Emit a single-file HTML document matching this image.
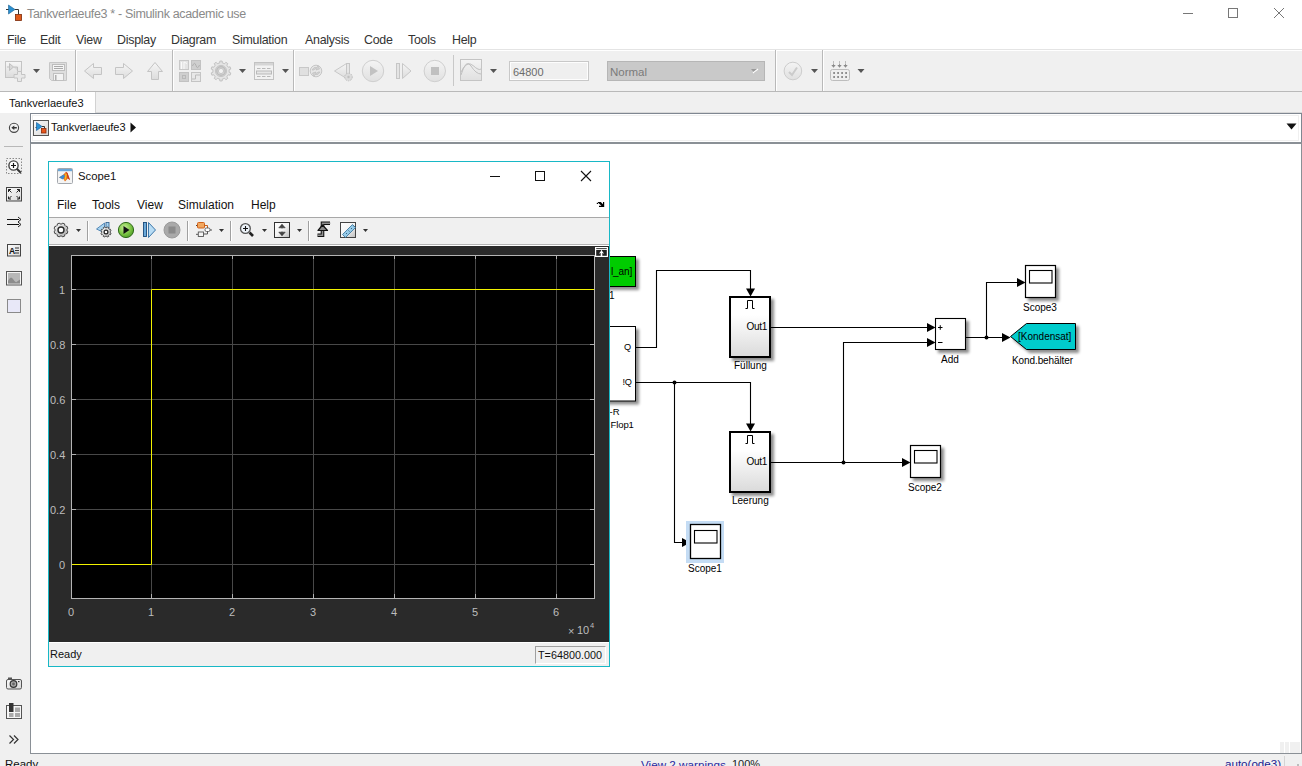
<!DOCTYPE html>
<html><head><meta charset="utf-8">
<style>
*{box-sizing:border-box;margin:0;padding:0}
html,body{width:1302px;height:766px;overflow:hidden;background:#fff;font-family:"Liberation Sans",sans-serif;}
.a{position:absolute}
.t{position:absolute;white-space:nowrap;line-height:1}
svg{position:absolute;overflow:visible}
</style></head><body>
<!-- title bar -->
<div class="a" style="left:0;top:0;width:1302px;height:30px;background:#fff"></div>
<svg style="left:0;top:0" width="30" height="30">
  <path d="M6 9.5H9" stroke="#333" stroke-width="1"/>
  <path d="M8.5 5 L15 9.5 L8.5 14 Z" fill="#2a8fd0" stroke="#1a5f90" stroke-width="0.6"/>
  <path d="M15 9.5H18.5V14.5" stroke="#333" stroke-width="1" fill="none"/>
  <rect x="15.5" y="14.5" width="6" height="6" fill="#e05a1a" stroke="#7a2a0a" stroke-width="0.8"/>
</svg>
<div class="t" style="left:27px;top:7.5px;font-size:12.5px;letter-spacing:-.33px;color:#8a8a8a">Tankverlaeufe3 * - Simulink academic use</div>
<svg style="left:0;top:0" width="1302" height="30">
  <path d="M1183 13.5H1193" stroke="#777" stroke-width="1"/>
  <rect x="1228.5" y="8.5" width="9" height="9" fill="none" stroke="#777" stroke-width="1"/>
  <path d="M1274 8L1284 18M1284 8L1274 18" stroke="#777" stroke-width="1"/>
</svg>
<!-- menu bar -->
<div class="t" style="left:7px;top:33.5px;font-size:12.4px;letter-spacing:-.25px;color:#333">File</div>
<div class="t" style="left:40px;top:33.5px;font-size:12.4px;letter-spacing:-.25px;color:#333">Edit</div>
<div class="t" style="left:76px;top:33.5px;font-size:12.4px;letter-spacing:-.25px;color:#333">View</div>
<div class="t" style="left:117px;top:33.5px;font-size:12.4px;letter-spacing:-.25px;color:#333">Display</div>
<div class="t" style="left:171px;top:33.5px;font-size:12.4px;letter-spacing:-.25px;color:#333">Diagram</div>
<div class="t" style="left:232px;top:33.5px;font-size:12.4px;letter-spacing:-.25px;color:#333">Simulation</div>
<div class="t" style="left:305px;top:33.5px;font-size:12.4px;letter-spacing:-.25px;color:#333">Analysis</div>
<div class="t" style="left:364px;top:33.5px;font-size:12.4px;letter-spacing:-.25px;color:#333">Code</div>
<div class="t" style="left:408px;top:33.5px;font-size:12.4px;letter-spacing:-.25px;color:#333">Tools</div>
<div class="t" style="left:452px;top:33.5px;font-size:12.4px;letter-spacing:-.25px;color:#333">Help</div>
<!-- toolbar -->
<div class="a" style="left:0;top:49px;width:1302px;height:1px;background:#e4e4e4"></div>
<div class="a" style="left:0;top:50px;width:1302px;height:41px;background:#f0f0f0"></div>
<div class="a" style="left:0;top:91px;width:1302px;height:1px;background:#b9b9b9"></div>
<svg style="left:0;top:50px" width="1302" height="41" viewBox="0 50 1302 41">
<defs>
<linearGradient id="gg" x1="0" y1="0" x2="0" y2="1"><stop offset="0" stop-color="#f6f6f6"/><stop offset="1" stop-color="#dcdcdc"/></linearGradient>
<linearGradient id="gc" x1="0" y1="0" x2="0" y2="1"><stop offset="0" stop-color="#f4f4f4"/><stop offset="1" stop-color="#e0e0e0"/></linearGradient>
</defs>
<!-- separators -->
<path d="M0 50.5H1302" stroke="#fff"/>
<path d="M75.5 50V91M172.5 50V91M293.5 50V91M775.5 50V91M822.5 50V91" stroke="#b9b9b9" stroke-width="1"/>
<path d="M76.5 51V91M173.5 51V91M294.5 51V91M776.5 51V91M823.5 51V91" stroke="#fff" stroke-width="1"/>
<path d="M453.5 55V86" stroke="#c8c8c8" stroke-width="1"/>
<!-- new model -->
<rect x="5.5" y="61.5" width="16" height="16" fill="url(#gg)" stroke="#c4c4c4"/>
<path d="M7 67H9.5M9.5 63.5L13.5 67L9.5 70.5Z M13.5 67H17.5V71" stroke="#c0c0c0" fill="#d8d8d8" stroke-width="1"/>
<path d="M17.5 71.5h4v3h3.5v3.5h-3.5v3.5h-4v-3.5h-3.5v-3.5h3.5z" fill="#e8e8e8" stroke="#c4c4c4"/>
<path d="M33 69H40L36.5 73Z" fill="#555"/>
<!-- save -->
<path d="M49.5 62.5H66.5V80.5H51.5L49.5 78.5Z" fill="#dedede" stroke="#c6c6c6"/>
<rect x="52.5" y="64.5" width="12" height="6" fill="#f5f5f5" stroke="#bdbdbd"/>
<path d="M54 66.5H63M54 68.5H63" stroke="#a9a9a9"/>
<rect x="53.5" y="73.5" width="10" height="7" fill="#f3f3f3" stroke="#c0c0c0"/>
<rect x="55" y="75" width="1.5" height="5.5" fill="#b0b0b0"/>
<!-- back/fwd/up -->
<path d="M84.5 71L93.5 63.5V67.5H101.5V74.5H93.5V78.5Z" fill="url(#gg)" stroke="#c4c4c4"/>
<path d="M132.5 71L123.5 63.5V67.5H115.5V74.5H123.5V78.5Z" fill="url(#gg)" stroke="#c4c4c4"/>
<path d="M155 62.5L162.5 71.5H158.5V79.5H151.5V71.5H147.5Z" fill="url(#gg)" stroke="#c4c4c4"/>
<!-- library -->
<rect x="179.5" y="60.5" width="9" height="9" fill="#e4e4e4" stroke="#c8c8c8"/>
<path d="M181.5 69V62M184 69V62L187 63.5" stroke="#fafafa" fill="none"/>
<rect x="191.5" y="60.5" width="9" height="9" fill="#cfcfcf" stroke="#c2c2c2"/>
<path d="M192.5 66Q194.5 61 196 65.5T199.5 65" stroke="#b0b0b0" fill="none"/>
<rect x="179.5" y="72.5" width="9" height="9" fill="#cfcfcf" stroke="#c2c2c2"/>
<rect x="182.5" y="75.5" width="3" height="3" fill="none" stroke="#b8b8b8"/>
<rect x="191.5" y="72.5" width="9" height="9" fill="#e8e8e8" stroke="#c4c4c4"/>
<path d="M192 79H195.5V75H200" stroke="#bcbcbc" fill="none"/>
<!-- gear -->
<path d="M229.10 72.28 L230.81 72.95 L230.08 75.19 L228.31 74.72 L226.80 76.80 L227.79 78.34 L225.89 79.72 L224.72 78.31 L222.28 79.10 L222.18 80.93 L219.82 80.93 L219.72 79.10 L217.28 78.31 L216.11 79.72 L214.21 78.34 L215.20 76.80 L213.69 74.72 L211.92 75.19 L211.19 72.95 L212.90 72.28 L212.90 69.72 L211.19 69.05 L211.92 66.81 L213.69 67.28 L215.20 65.20 L214.21 63.66 L216.11 62.28 L217.28 63.69 L219.72 62.90 L219.82 61.07 L222.18 61.07 L222.28 62.90 L224.72 63.69 L225.89 62.28 L227.79 63.66 L226.80 65.20 L228.31 67.28 L230.08 66.81 L230.81 69.05 L229.10 69.72Z" fill="#e4e4e4" stroke="#c2c2c2"/>
<circle cx="221" cy="71" r="5.6" fill="#d8d8d8" stroke="#c6c6c6"/>
<circle cx="221" cy="71" r="4.2" fill="none" stroke="#bdbdbd" stroke-width="1.4"/>
<circle cx="221" cy="71" r="2.6" fill="#f2f2f2" stroke="#c6c6c6"/>
<path d="M239 69H246L242.5 73Z" fill="#555"/>
<!-- table -->
<rect x="254.5" y="62.5" width="19" height="17" fill="#f2f2f2" stroke="#c2c2c2"/>
<rect x="255" y="63" width="18" height="2.5" fill="#d5d5d5"/>
<path d="M257 68.5h3.5M262 68.5h3.5M267 68.5h3.5M257 76.5h3.5M262 76.5h3.5M267 76.5h3.5" stroke="#b9b9b9"/>
<rect x="256.5" y="71" width="15" height="3" fill="#e6e6e6" stroke="#b9b9b9"/>
<path d="M282 69H289L285.5 73Z" fill="#555"/>
<!-- record -->
<rect x="299.5" y="67.5" width="9" height="8" fill="#e0e0e0" stroke="#c8c8c8"/>
<circle cx="316" cy="71" r="5.8" fill="#e6e6e6" stroke="#c6c6c6"/>
<path d="M312 70q1.5-3.5 5-2.5l1-2 1.5 3.5-3.5 1 1-1.2q-2.5-.5-3 1.2z M320 72q-1.5 3.5-5 2.5l-1 2-1.5-3.5 3.5-1-1 1.2q2.5.5 3-1.2z" fill="#d2d2d2" stroke="#c0c0c0" stroke-width=".7"/>
<!-- step back -->
<path d="M334.5 71L346.5 63.5V78.5Z" fill="url(#gg)" stroke="#c8c8c8"/>
<rect x="346.5" y="63.5" width="3" height="14" fill="#e6e6e6" stroke="#c6c6c6"/>
<circle cx="348.5" cy="77" r="3.8" fill="#dcdcdc" stroke="#bfbfbf" stroke-dasharray="1.5 1"/>
<circle cx="348.5" cy="77" r="1.2" fill="#c0c0c0"/>
<!-- play -->
<circle cx="373" cy="71" r="10.7" fill="url(#gc)" stroke="#cfcfcf"/>
<path d="M370 66V76L378 71Z" fill="#c2c2c2"/>
<!-- step fwd -->
<rect x="396.5" y="63.5" width="3" height="15" fill="#e4e4e4" stroke="#c6c6c6"/>
<path d="M402.5 63.5L411 71L402.5 78.5Z" fill="url(#gg)" stroke="#c8c8c8"/>
<!-- stop -->
<circle cx="434.8" cy="71" r="10.7" fill="url(#gc)" stroke="#cfcfcf"/>
<rect x="431" y="67" width="8" height="8" fill="#c0c0c0"/>
<!-- scope icon -->
<rect x="460.5" y="59.5" width="21" height="21" fill="url(#gc)" stroke="#c4c4c4"/>
<path d="M461 75Q466 58 471 66T481 74M461 72Q467 60 473 65.5T481 69" stroke="#c0c0c0" fill="none" stroke-width="1"/>
<path d="M490 69H497L493.5 73Z" fill="#555"/>
<!-- input -->
<rect x="509.5" y="61.5" width="79" height="19" fill="#efefef" stroke="#c8c8c8"/>
<rect x="510.5" y="62.5" width="77" height="17" fill="none" stroke="#fdfdfd"/>
<!-- normal box -->
<rect x="607.5" y="61.5" width="157" height="19" fill="#c9c9c9" stroke="#b6b6b6"/>
<path d="M751 69H758L754.5 73Z" fill="#9a9a9a"/>
<path d="M753 73L758 69" stroke="#fff" stroke-width="1.2"/>
<!-- check -->
<circle cx="792.9" cy="71" r="8.8" fill="url(#gc)" stroke="#cdcdcd"/>
<path d="M789 72L792 75L797 67.5" stroke="#cbcbcb" stroke-width="2" fill="none"/>
<path d="M811 69H818L814.5 73Z" fill="#555"/>
<!-- pin icon -->
<path d="M833.5 61.5V62.5M839.5 61.5V62.5M845.5 61.5V62.5" stroke="#8a8a8a" stroke-width="1"/>
<path d="M833.5 63.5V66M839.5 63.5V66M845.5 63.5V66" stroke="#9a9a9a" stroke-width="1"/>
<path d="M831.3 65L833.5 67.8L835.7 65ZM837.3 65L839.5 67.8L841.7 65ZM843.3 65L845.5 67.8L847.7 65Z" fill="#8a8a8a"/>
<rect x="830.5" y="69.5" width="19" height="11" rx="2" fill="#efefef" stroke="#bdbdbd"/>
<path d="M833.2 73H835M837.2 73H839M841.2 73H843M845.2 73H847M833.2 77H835M837.2 77H839M841.2 77H843M845.2 77H847" stroke="#8f8f8f" stroke-width="1.8"/>
<path d="M857.5 69H864.5L861 73Z" fill="#555"/>
</svg>
<div class="t" style="left:513px;top:67px;font-size:11px;color:#6b6b6b">64800</div>
<div class="t" style="left:610px;top:67px;font-size:11.5px;color:#7a7a7a">Normal</div>

<!-- tab row -->
<div class="a" style="left:0;top:92px;width:1302px;height:21px;background:#f0f0f0"></div>
<div class="a" style="left:0;top:92px;width:95px;height:21px;background:#fff"></div>
<div class="a" style="left:95px;top:92px;width:1px;height:21px;background:#d2d2d2"></div>
<div class="a" style="left:96px;top:112px;width:1206px;height:1px;background:#d8d8d8"></div>
<div class="t" style="left:9px;top:98px;font-size:11px;color:#111">Tankverlaeufe3</div>
<!-- left palette -->
<div class="a" style="left:0;top:113px;width:30px;height:641px;background:#f0f0f0"></div>
<!-- breadcrumb -->
<div class="a" style="left:30px;top:113px;width:1272px;height:30px;background:#fff;border:1px solid #7f8791"></div>
<div class="a" style="left:32px;top:115px;width:1267px;height:26px;border:1px solid #f0f0f0"></div>
<div class="a" style="left:31px;top:142px;width:1271px;height:2px;background:#8a9096"></div>
<!-- breadcrumb contents -->

<svg style="left:0;top:0" width="1302" height="766">
<defs><linearGradient id="gw" x1="0" y1="0" x2="1" y2="1"><stop offset="0" stop-color="#fafafa"/><stop offset="1" stop-color="#d8d8d8"/></linearGradient></defs>
<rect x="33.5" y="120.5" width="15" height="15" fill="url(#gw)" stroke="#555"/>
<path d="M35.5 127.5H37.5" stroke="#333"/>
<path d="M36.5 122.5L42 126.5L36.5 130.5Z" fill="#2d95d6" stroke="#1a60a0" stroke-width=".7"/>
<path d="M42 126.5H44.5V128.5" stroke="#333" fill="none"/>
<rect x="41.5" y="128.5" width="4.5" height="4.5" fill="#e8561c" stroke="#8a2a08" stroke-width=".8"/>
<path d="M130.5 122.5V132.5L136 127.5Z" fill="#111"/>
<path d="M1286.5 123.5H1296.5L1291.5 129.5Z" fill="#111"/>
<!-- palette -->
<circle cx="14" cy="127.8" r="4.6" fill="none" stroke="#444" stroke-width="1.1"/>
<path d="M11.3 127.8L14.3 125.5V127H16.8V128.6H14.3V130.1Z" fill="#333"/>
<path d="M4 146.5H23" stroke="#b8b8b8"/>
<rect x="6.5" y="158.5" width="15" height="15" fill="none" stroke="#8a8a8a" stroke-dasharray="1.5 1.5"/>
<circle cx="13.5" cy="165.5" r="4.6" fill="#fff" stroke="#444" stroke-width="1.4"/>
<path d="M16.8 168.8L20.8 172.8" stroke="#333" stroke-width="2"/>
<path d="M11 165.5H16M13.5 163V168" stroke="#111" stroke-width="1.2"/>
<rect x="6.5" y="187.5" width="15" height="13.5" fill="url(#gw)" stroke="#444"/>
<path d="M8.5 189.5L11.5 192.5M8.5 189.5h2.5M8.5 189.5v2.5 M19.5 189.5L16.5 192.5M19.5 189.5h-2.5M19.5 189.5v2.5 M8.5 199L11.5 196M8.5 199h2.5M8.5 199v-2.5 M19.5 199L16.5 196M19.5 199h-2.5M19.5 199v-2.5" stroke="#222" fill="none" stroke-width="1"/>
<path d="M7 219.5H19M7 224.5H19" stroke="#111" stroke-width="1.2"/>
<path d="M18 217L21 219.5L18 222M18 222L21 224.5L18 227" stroke="#222" fill="none" stroke-width="1"/>
<rect x="7.5" y="244.5" width="13" height="11.5" fill="url(#gw)" stroke="#444"/>
<text x="9" y="253.5" font-family="Liberation Sans" font-weight="bold" font-size="8.5" fill="#111">A</text>
<path d="M15 248h4M15 250.5h4M15 253h4" stroke="#333" stroke-width="1"/>
<rect x="6.5" y="271.5" width="15" height="13.5" fill="#f4f4f4" stroke="#555"/>
<rect x="8" y="273" width="12" height="10.5" fill="#b8b8b8"/>
<path d="M8 281Q10.5 275 13 279T16.5 282T20 279.5V283.5H8Z" fill="#8c8c8c"/>
<rect x="7.5" y="299.5" width="13" height="13" fill="#e8e8f8" stroke="#8a8a8a"/>
<!-- camera -->
<rect x="6.5" y="679.5" width="15" height="9.5" rx="1.5" fill="url(#gw)" stroke="#555"/>
<rect x="8" y="677.5" width="4" height="2" fill="#555"/>
<circle cx="13.5" cy="684" r="3.3" fill="#aaa" stroke="#333" stroke-width="1.2"/>
<circle cx="13.5" cy="684" r="1.4" fill="#666"/>
<rect x="18" y="681" width="1.5" height="1.2" fill="#333"/>
<!-- model browser -->
<rect x="6.5" y="705.5" width="15" height="13" fill="#f6f6f6" stroke="#555"/>
<rect x="9" y="703" width="4.5" height="9" fill="#333"/>
<rect x="15" y="707.5" width="5" height="4.5" fill="#aaa"/>
<rect x="9" y="713" width="4.5" height="4" fill="#aaa"/>
<rect x="15" y="713" width="5" height="4" fill="#aaa"/>
<path d="M9.5 735.5L13.5 739.5L9.5 743.5M14 735.5L18 739.5L14 743.5" stroke="#333" fill="none" stroke-width="1.2"/>
</svg>
<div class="t" style="left:51px;top:122px;font-size:11px;color:#111">Tankverlaeufe3</div>
<!-- canvas -->
<div class="a" style="left:30px;top:143px;width:1px;height:610px;background:#8a9096"></div>
<div class="a" style="left:30px;top:753px;width:1272px;height:1px;background:#8a9096"></div>
<div class="a" style="left:1301px;top:143px;width:1px;height:611px;background:#8a9096"></div>
<div class="a" style="left:1280px;top:742px;width:4px;height:11px;background:#f0f0f0"></div>
<div class="a" style="left:1285px;top:742px;width:4px;height:11px;background:#f0f0f0"></div>
<div class="a" style="left:1290px;top:742px;width:10px;height:11px;background:#f0f0f0"></div>
<!-- diagram -->
<svg style="left:0;top:0" width="1302" height="766">
<defs>
<linearGradient id="gb" x1="0" y1="0" x2="0" y2="1"><stop offset="0" stop-color="#ffffff"/><stop offset=".3" stop-color="#ffffff"/><stop offset="1" stop-color="#dadada"/></linearGradient>
<filter id="sh" x="-30%" y="-30%" width="160%" height="160%"><feGaussianBlur in="SourceAlpha" stdDeviation="1.6"/><feOffset dx="2.5" dy="2.5"/><feComponentTransfer><feFuncA type="linear" slope="0.45"/></feComponentTransfer><feMerge><feMergeNode/><feMergeNode in="SourceGraphic"/></feMerge></filter>
</defs>
<g fill="none" stroke="#000" stroke-width="1.1">
<!-- Q to Fuellung -->
<path d="M635 347.5H656.5V270.5H750.5V290"/>
<!-- !Q to Leerung -->
<path d="M635 382.5H750.5V425"/>
<path d="M674.5 382.5V542.5H684"/>
<!-- Fuellung out to Add + -->
<path d="M771 327.5H929"/>
<!-- Leerung out -->
<path d="M771 462.5H904"/>
<path d="M843.5 462.5V342.5H929"/>
<!-- Add out -->
<path d="M966 337.5H1004"/>
<path d="M986.5 337.5V282.5H1019"/>
</g>
<g fill="#000">
<path d="M746 288.5H755L750.5 296.5Z"/>
<path d="M746 423.5H755L750.5 431.5Z"/>
<path d="M682 538L690.5 542.5L682 547Z"/>
<path d="M927 323L935.5 327.5L927 332Z"/>
<path d="M927 338L935.5 342.5L927 347Z"/>
<path d="M902 458L910.5 462.5L902 467Z"/>
<path d="M1002 333L1010.5 337.5L1002 342Z"/>
<path d="M1017 278L1025.5 282.5L1017 287Z"/>
<circle cx="674.5" cy="382.5" r="2"/>
<circle cx="843.5" cy="462.5" r="2"/>
<circle cx="986.5" cy="337.5" r="2"/>
</g>
<!-- blocks -->
<g filter="url(#sh)">
<rect x="595" y="256.5" width="40.5" height="30" fill="#00cc00" stroke="#000" stroke-width="1"/>
<rect x="560" y="326.5" width="75.5" height="74.5" fill="#fff" stroke="#000" stroke-width="1"/>
<rect x="730" y="297" width="40" height="60" fill="url(#gb)" stroke="#000" stroke-width="2"/>
<rect x="730" y="432" width="40" height="60" fill="url(#gb)" stroke="#000" stroke-width="2"/>
<rect x="935.5" y="318.5" width="30" height="31" fill="#fff" stroke="#000" stroke-width="1.1"/>
<rect x="1025.5" y="265.5" width="30" height="32" fill="#fff" stroke="#000" stroke-width="1.2"/>
<path d="M1010.5 336.5L1026.5 323.5H1075.5V349.5H1026.5Z" fill="#00cccc" stroke="#000" stroke-width="1"/>
<rect x="910.5" y="445.5" width="30" height="32" fill="#fff" stroke="#000" stroke-width="1.2"/>
</g>
<rect x="686" y="521" width="38" height="42" fill="#c4dcf4"/>
<rect x="690.5" y="524.5" width="30" height="34" fill="#fff" stroke="#000" stroke-width="1.3"/>
<rect x="694.5" y="530.5" width="22.5" height="12.5" fill="none" stroke="#000" stroke-width="1.1"/>
<rect x="1029.5" y="270.5" width="22.5" height="12.5" fill="none" stroke="#000" stroke-width="1.1"/>
<rect x="914.5" y="450.5" width="22.5" height="12.5" fill="none" stroke="#000" stroke-width="1.1"/>
<!-- pulse symbols -->
<path d="M745.5 308.5H747.5V300.5H752.5V308.5H754.5" fill="none" stroke="#000" stroke-width="1"/>
<path d="M745.5 443.5H747.5V435.5H752.5V443.5H754.5" fill="none" stroke="#000" stroke-width="1"/>
<path d="M938 327.5H942.5M940.25 325.2V329.8M938 342.5H942.5" stroke="#000" stroke-width="1"/>
</svg>
<div class="t" style="left:611px;top:267px;font-size:10px;color:#000;letter-spacing:-.1px">l_an]</div>
<div class="t" style="left:609px;top:291px;font-size:10px;color:#000">1</div>
<div class="t" style="left:624px;top:342.5px;font-size:9.2px;color:#000">Q</div>
<div class="t" style="left:622.5px;top:377.5px;font-size:9.2px;color:#000;letter-spacing:-.4px">!Q</div>
<div class="t" style="left:609.5px;top:406.5px;font-size:9.5px;color:#000">-R</div>
<div class="t" style="left:610.5px;top:419.5px;font-size:9.5px;color:#000;letter-spacing:-.1px">Flop1</div>
<div class="t" style="left:746.5px;top:322px;font-size:10px;color:#000;letter-spacing:-.3px">Out1</div>
<div class="t" style="left:746.5px;top:457px;font-size:10px;color:#000;letter-spacing:-.3px">Out1</div>
<div class="t" style="left:734px;top:361px;font-size:10px;color:#000;letter-spacing:0px">Füllung</div>
<div class="t" style="left:732px;top:496px;font-size:10px;color:#000;letter-spacing:0px">Leerung</div>
<div class="t" style="left:941px;top:355px;font-size:10px;color:#000">Add</div>
<div class="t" style="left:1023px;top:303px;font-size:10px;color:#000;letter-spacing:0px">Scope3</div>
<div class="t" style="left:908px;top:483px;font-size:10px;color:#000;letter-spacing:0px">Scope2</div>
<div class="t" style="left:688px;top:564px;font-size:10px;color:#000;letter-spacing:0px">Scope1</div>
<div class="t" style="left:1018px;top:332px;font-size:10px;color:#000;letter-spacing:0px">[Kondensat]</div>
<div class="t" style="left:1012px;top:356px;font-size:10px;color:#000;letter-spacing:-.1px">Kond.behälter</div>
<!-- scope window -->
<div class="a" style="left:48px;top:161px;width:562px;height:506px;border:1px solid #18b8c6;background:#fff"></div>
<svg style="left:0;top:0" width="1302" height="766">
<defs>
<linearGradient id="mt" x1="0" y1="0" x2="0" y2="1"><stop offset="0" stop-color="#fbfbfb"/><stop offset="1" stop-color="#dcdcdc"/></linearGradient>
<radialGradient id="grn" cx=".4" cy=".35" r=".7"><stop offset="0" stop-color="#c8f09a"/><stop offset=".6" stop-color="#7cc444"/><stop offset="1" stop-color="#4c9a26"/></radialGradient>
</defs>
<!-- matlab icon -->
<rect x="57.5" y="168.5" width="15" height="15" rx="1" fill="#f4f4f4" stroke="#a4a8ae"/>
<rect x="58" y="169" width="14" height="2.2" fill="#6aa6d8"/>
<path d="M59 177.5L63.5 174.5L66 171.8L67.5 173L70 180L67.8 178.5L65 181.5L63.5 179Z" fill="#e8701a"/>
<path d="M59 177.5L63.5 174.5L65 176L63 179.5Z" fill="#3a8ad0"/>
<path d="M66 171.8L67.5 173L70 180L67.8 178.5Z" fill="#c83a20"/>
<path d="M65.6 173L66.8 174.5L66 179L64.5 180.5Z" fill="#f6c020"/>
<!-- window buttons -->
<path d="M490 176.5H500" stroke="#111" stroke-width="1"/>
<rect x="535.5" y="171.5" width="9" height="9" fill="none" stroke="#111" stroke-width="1"/>
<path d="M581 171L591 181M591 171L581 181" stroke="#111" stroke-width="1.1"/>
<!-- dock arrow -->
<rect x="596.8" y="202.8" width="1.2" height="1.2" fill="#000"/>
<path d="M598 202H600.8L603 204.3V202H604.2V207H599V205.8H601.5L598 202.8Z" fill="#000"/>
</svg>
<div class="t" style="left:78px;top:171px;font-size:11.3px;color:#111">Scope1</div>
<div class="t" style="left:57px;top:199px;font-size:12px;color:#111">File</div>
<div class="t" style="left:92px;top:199px;font-size:12px;color:#111">Tools</div>
<div class="t" style="left:137px;top:199px;font-size:12px;color:#111">View</div>
<div class="t" style="left:178px;top:199px;font-size:12px;color:#111">Simulation</div>
<div class="t" style="left:251px;top:199px;font-size:12px;color:#111">Help</div>
<!-- scope toolbar -->
<div class="a" style="left:49px;top:217px;width:560px;height:1px;background:#a8a8a8"></div>
<div class="a" style="left:49px;top:218px;width:560px;height:26px;background:#f0f0f0"></div>
<div class="a" style="left:49px;top:244px;width:560px;height:1px;background:#b4b4b4"></div>
<div class="a" style="left:49px;top:245px;width:560px;height:1px;background:#fff"></div>
<svg style="left:0;top:0" width="1302" height="766">
<path d="M87.5 221V241M187.5 221V241M230.5 221V241M308.5 221V241" stroke="#a0a0a0"/>
<path d="M88.5 221V241M188.5 221V241M231.5 221V241M309.5 221V241" stroke="#fff"/>
<defs><linearGradient id="gear1" x1="0" y1="0" x2="1" y2="1"><stop offset="0" stop-color="#fafafa"/><stop offset="1" stop-color="#a8a8a8"/></linearGradient></defs>
<path d="M67.02 230.95 L67.92 231.60 L67.02 233.76 L65.94 233.59 L64.59 234.94 L64.76 236.02 L62.60 236.92 L61.95 236.02 L60.05 236.02 L59.40 236.92 L57.24 236.02 L57.41 234.94 L56.06 233.59 L54.98 233.76 L54.08 231.60 L54.98 230.95 L54.98 229.05 L54.08 228.40 L54.98 226.24 L56.06 226.41 L57.41 225.06 L57.24 223.98 L59.40 223.08 L60.05 223.98 L61.95 223.98 L62.60 223.08 L64.76 223.98 L64.59 225.06 L65.94 226.41 L67.02 226.24 L67.92 228.40 L67.02 229.05Z" fill="url(#gear1)" stroke="#3a3a3a" stroke-width=".9"/>
<circle cx="61" cy="230" r="3" fill="#fff" stroke="#2a2a2a" stroke-width="1.4"/>
<path d="M76 229H81L78.5 232Z" fill="#333"/>
<!-- step back -->
<path d="M96.5 229L104.5 223V233Z" fill="#a8d4f0" stroke="#3a74a8" stroke-width=".8"/>
<rect x="106" y="222.5" width="3" height="9" fill="#a8d4f0" stroke="#2a5a8a" stroke-width=".8"/>
<path d="M110.35 232.69 L111.07 233.17 L110.41 234.75 L109.56 234.59 L108.59 235.56 L108.75 236.41 L107.17 237.07 L106.69 236.35 L105.31 236.35 L104.83 237.07 L103.25 236.41 L103.41 235.56 L102.44 234.59 L101.59 234.75 L100.93 233.17 L101.65 232.69 L101.65 231.31 L100.93 230.83 L101.59 229.25 L102.44 229.41 L103.41 228.44 L103.25 227.59 L104.83 226.93 L105.31 227.65 L106.69 227.65 L107.17 226.93 L108.75 227.59 L108.59 228.44 L109.56 229.41 L110.41 229.25 L111.07 230.83 L110.35 231.31Z" fill="url(#gear1)" stroke="#333" stroke-width=".8"/>
<circle cx="106" cy="232" r="1.9" fill="#fff" stroke="#222" stroke-width="1.2"/>
<!-- play -->
<circle cx="126" cy="230" r="7.6" fill="url(#grn)" stroke="#2f6a1a" stroke-width="1"/>
<path d="M123.5 226V234L129.5 230Z" fill="#111"/>
<!-- step fwd -->
<rect x="143.5" y="222.5" width="3" height="14" fill="#6aa8d8" stroke="#1a4a7a" stroke-width=".9"/>
<path d="M148.5 222.5L155.5 230L148.5 237.5Z" fill="#b8dcf4" stroke="#2a6aa0" stroke-width=".9"/>
<!-- stop -->
<circle cx="172" cy="230" r="8" fill="#a9a9a9" stroke="#9a9a9a"/>
<rect x="168.5" y="226.5" width="7" height="7" fill="#8a8a8a"/>
<!-- highlight -->
<path d="M196 225.5H198" stroke="#444"/>
<rect x="197.5" y="222.5" width="7" height="5.5" rx="1" fill="#f2a860" stroke="#d0601a" stroke-width="1"/>
<path d="M204.5 225.5H207.5V228" stroke="#c8601a" fill="none"/>
<rect x="205" y="228" width="5" height="3.5" rx="1.5" fill="#fff" stroke="#555" stroke-width=".9"/>
<path d="M210 230H212M207.5 231.5V234H203.5M196 234.3H198" stroke="#555" fill="none"/>
<rect x="198.3" y="232" width="5.2" height="4.5" fill="#f4f4f4" stroke="#555" stroke-width=".9"/>
<path d="M219 229H224L221.5 232Z" fill="#333"/>
<!-- zoom -->
<path d="M249.5 232.5L253 236" stroke="#222" stroke-width="2.6"/>
<circle cx="245.4" cy="228.5" r="4.9" fill="#eef4fa" stroke="#555" stroke-width="1.3"/>
<path d="M243 228.5H248M245.5 226V231" stroke="#111" stroke-width="1.1"/>
<path d="M262 229H267L264.5 232Z" fill="#333"/>
<!-- scale -->
<defs><linearGradient id="dg" x1="0" y1="0" x2="1" y2="1"><stop offset="0" stop-color="#ffffff"/><stop offset=".5" stop-color="#f4f4f4"/><stop offset="1" stop-color="#bcbcbc"/></linearGradient></defs>
<rect x="274.5" y="222.5" width="15" height="15" fill="url(#dg)" stroke="#333"/>
<path d="M282 224.5V228.5M282 235.5V231.5" stroke="#888" stroke-width="1.4"/>
<path d="M278.8 227.8L282 224.3L285.2 227.8Z M278.8 232.2L282 235.7L285.2 232.2Z" fill="#444" stroke="#333" stroke-width=".6"/>
<path d="M297 229H302L299.5 232Z" fill="#333"/>
<!-- trigger-like icon -->
<path d="M317.5 235.3H322.5V223.3H330" fill="none" stroke="#111" stroke-width="3.6" stroke-linejoin="miter"/>
<path d="M317.2 235.3H322.5V223.3H330.3" fill="none" stroke="#909090" stroke-width="1.5" stroke-linejoin="miter"/>
<path d="M318 230.5L322.5 225L327.5 230.5Z" fill="#8a8a8a" stroke="#111" stroke-width="1.2" stroke-linejoin="round"/>
<!-- ruler -->
<rect x="340.5" y="222.5" width="15" height="15" fill="url(#dg)" stroke="#444"/>
<path d="M342.5 234.5L352.5 224.5L355.5 227.5L345.5 237.5Z" fill="#96cae8" stroke="#2f6e98" stroke-width=".8"/>
<path d="M346 233L347 234M348.5 230.5L349.5 231.5M351 228L352 229M353.3 225.7L354.3 226.7" stroke="#1f4f70" stroke-width=".8"/>
<path d="M363 229H368L365.5 232Z" fill="#333"/>
</svg>
<!-- plot area -->
<div class="a" style="left:49px;top:246px;width:560px;height:396px;background:#2a2a2a"></div>
<div class="a" style="left:49px;top:642px;width:560px;height:1px;background:#fff"></div>
<div class="a" style="left:49px;top:643px;width:560px;height:23px;background:#f0f0f0"></div>
<svg style="left:0;top:0" width="1302" height="766">
<rect x="71" y="255" width="524" height="344" fill="#000"/>
<g stroke="#484848" stroke-width="1">
<path d="M151.5 256V598M232.5 256V598M313.5 256V598M394.5 256V598M475.5 256V598M556.5 256V598"/>
<path d="M72 289.5H594M72 344.5H594M72 399.5H594M72 454.5H594M72 509.5H594M72 564.5H594"/>
</g>
<g stroke="#b0b0b0" stroke-width="1">
<path d="M151.5 256V259M232.5 256V259M313.5 256V259M394.5 256V259M475.5 256V259M556.5 256V259"/>
<path d="M151.5 594V598M232.5 594V598M313.5 594V598M394.5 594V598M475.5 594V598M556.5 594V598"/>
<path d="M72 289.5H76M72 344.5H76M72 399.5H76M72 454.5H76M72 509.5H76M72 564.5H76"/>
<path d="M590 289.5H594M590 344.5H594M590 399.5H594M590 454.5H594M590 509.5H594M590 564.5H594"/>
</g>
<rect x="71.5" y="255.5" width="523" height="343" fill="none" stroke="#b4b4b4" stroke-width="1"/>
<path d="M72 564.5H151.5V289.5H594" fill="none" stroke="#f2f200" stroke-width="1"/>
<!-- undock icon -->
<rect x="595" y="247" width="13" height="10" fill="#fff"/>
<rect x="596.2" y="248.2" width="10.6" height="0.9" fill="#222"/>
<rect x="596.2" y="250" width="10.6" height="5.8" fill="#222"/>
<path d="M598.8 253.8L601.5 250.2L604.2 253.8L602.3 253V256H600.7V253Z" fill="#fff"/>
<rect x="601.2" y="250" width="0.6" height="6" fill="#fff"/>
</svg>
<div class="t" style="left:59px;top:285px;font-size:11px;color:#bdbdbd">1</div>
<div class="t" style="left:50px;top:340px;font-size:11px;color:#bdbdbd">0.8</div>
<div class="t" style="left:50px;top:395px;font-size:11px;color:#bdbdbd">0.6</div>
<div class="t" style="left:50px;top:450px;font-size:11px;color:#bdbdbd">0.4</div>
<div class="t" style="left:50px;top:505px;font-size:11px;color:#bdbdbd">0.2</div>
<div class="t" style="left:59px;top:560px;font-size:11px;color:#bdbdbd">0</div>
<div class="t" style="left:68px;top:607px;font-size:11px;color:#bdbdbd">0</div>
<div class="t" style="left:148px;top:607px;font-size:11px;color:#bdbdbd">1</div>
<div class="t" style="left:229px;top:607px;font-size:11px;color:#bdbdbd">2</div>
<div class="t" style="left:310px;top:607px;font-size:11px;color:#bdbdbd">3</div>
<div class="t" style="left:391px;top:607px;font-size:11px;color:#bdbdbd">4</div>
<div class="t" style="left:472px;top:607px;font-size:11px;color:#bdbdbd">5</div>
<div class="t" style="left:553px;top:607px;font-size:11px;color:#bdbdbd">6</div>
<div class="t" style="left:568px;top:626px;font-size:11px;color:#bdbdbd">&#215;</div>
<div class="t" style="left:577px;top:625px;font-size:11px;color:#bdbdbd">10</div>
<div class="t" style="left:590px;top:622px;font-size:7.5px;color:#bdbdbd">4</div>
<!-- scope status -->
<div class="t" style="left:50px;top:649px;font-size:11px;color:#111">Ready</div>
<div class="a" style="left:535px;top:646px;width:71px;height:18px;background:#f0f0f0;border-top:1px solid #a0a0a0;border-left:1px solid #a0a0a0;border-right:1px solid #fff;border-bottom:1px solid #fff"></div>
<div class="t" style="left:538px;top:650px;font-size:10.8px;color:#111">T=64800.000</div>
<!-- status bar -->
<div class="a" style="left:0;top:754px;width:1302px;height:12px;background:#f0f0f0"></div>
<div class="t" style="left:5px;top:759px;font-size:11.5px;color:#111">Ready</div>
<div class="t" style="left:641px;top:759px;font-size:11.7px;color:#2a2aa0">View 2 warnings</div>
<div class="t" style="left:732px;top:759px;font-size:11px;color:#222">100%</div>
<div class="t" style="left:1225px;top:758px;font-size:11.6px;color:#1a1a90">auto(ode3)</div>
<div class="a" style="left:1284px;top:756px;width:1px;height:10px;background:#d4d4d4"></div>
<div class="a" style="left:1297px;top:764px;width:2px;height:2px;background:#bdbdbd"></div>
</body></html>
